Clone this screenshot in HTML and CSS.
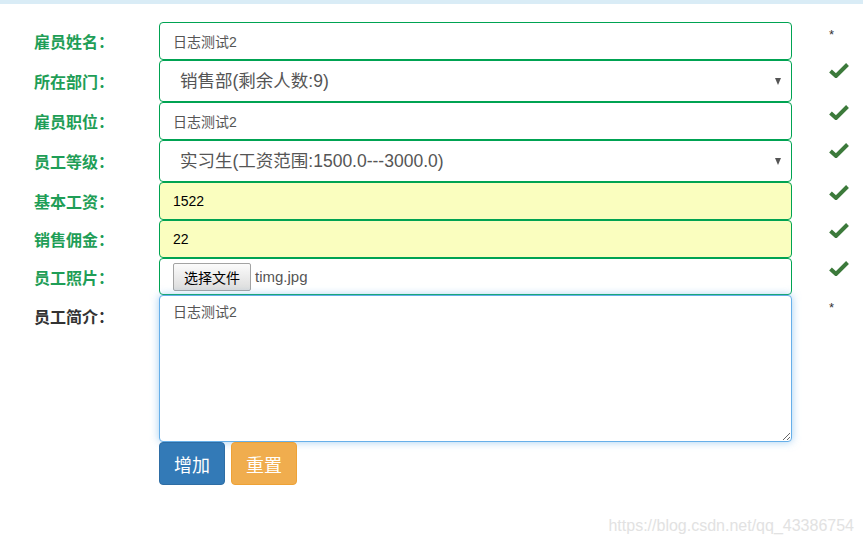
FILE: index.html
```html
<!DOCTYPE html>
<html lang="zh-CN">
<head>
    <meta charset="UTF-8">
    <title>添加雇员</title>
    <link rel="stylesheet" href="styles.css">
</head>
<body>
    <div class="top-bar"></div>

    <form class="emp-form">
        <!-- 雇员姓名 -->
        <label class="form-label">雇员姓名：</label>
        <input class="form-field" type="text" value="日志测试2">
        <div class="status"><span class="star">*</span></div>

        <!-- 所在部门 -->
        <label class="form-label">所在部门：</label>
        <div class="select-wrap">
            <select class="form-field form-select">
                <option>销售部(剩余人数:9)</option>
            </select>
        </div>
        <div class="status"><svg class="check" viewBox="0 0 20 16"><path d="M1.5 9 L7 14 L18.5 2.5"/></svg></div>

        <!-- 雇员职位 -->
        <label class="form-label">雇员职位：</label>
        <input class="form-field" type="text" value="日志测试2">
        <div class="status"><svg class="check" viewBox="0 0 20 16"><path d="M1.5 9 L7 14 L18.5 2.5"/></svg></div>

        <!-- 员工等级 -->
        <label class="form-label">员工等级：</label>
        <div class="select-wrap">
            <select class="form-field form-select">
                <option>实习生(工资范围:1500.0---3000.0)</option>
            </select>
        </div>
        <div class="status"><svg class="check" viewBox="0 0 20 16"><path d="M1.5 9 L7 14 L18.5 2.5"/></svg></div>

        <!-- 基本工资 -->
        <label class="form-label">基本工资：</label>
        <input class="form-field filled" type="text" value="1522">
        <div class="status"><svg class="check" viewBox="0 0 20 16"><path d="M1.5 9 L7 14 L18.5 2.5"/></svg></div>

        <!-- 销售佣金 -->
        <label class="form-label">销售佣金：</label>
        <input class="form-field filled" type="text" value="22">
        <div class="status"><svg class="check" viewBox="0 0 20 16"><path d="M1.5 9 L7 14 L18.5 2.5"/></svg></div>

        <!-- 员工照片 -->
        <label class="form-label">员工照片：</label>
        <div class="form-field file-field">
            <button type="button" class="file-btn">选择文件</button>
            <span class="file-name">timg.jpg</span>
        </div>
        <div class="status"><svg class="check" viewBox="0 0 20 16"><path d="M1.5 9 L7 14 L18.5 2.5"/></svg></div>

        <!-- 员工简介 -->
        <label class="form-label label-top label-dark">员工简介：</label>
        <textarea class="form-field note">日志测试2</textarea>
        <div class="status"><span class="star">*</span></div>

        <div></div>
        <div class="actions">
            <button type="button" class="btn btn-primary">增加</button>
            <button type="reset" class="btn btn-warning">重置</button>
        </div>
        <div></div>
    </form>

    <div class="watermark">https://blog.csdn.net/qq_43386754</div>
</body>
</html>
```

FILE: styles.css
```css
* {
    margin: 0;
    padding: 0;
    box-sizing: border-box;
}

body {
    background-color: #fff;
    font-family: "Liberation Sans", "Noto Sans CJK SC", sans-serif;
    color: #333;
    height: 544px;
    overflow: hidden;
    position: relative;
}

.top-bar {
    height: 4px;
    background-color: #d9ecf6;
}

/* Form Styles */
.emp-form {
    display: grid;
    grid-template-columns: 125px 633px 1fr;
    padding: 18px 0 0 34px;
}

.form-label {
    display: flex;
    align-items: center;
    font-size: 16px;
    font-weight: bold;
    color: #1f9e57;
}

.label-top {
    align-items: flex-start;
    padding-top: 9px;
}

.label-dark {
    color: #333;
}

.form-field {
    display: block;
    width: 100%;
    height: 38px;
    padding: 0 13px;
    border: 1px solid #00a352;
    border-radius: 4px;
    background-color: #fff;
    font-family: "Liberation Sans", "Noto Sans CJK SC", sans-serif;
    font-size: 14px;
    color: #555;
    outline: none;
}

.filled {
    background-color: #fafebf;
    color: #000;
}

.select-wrap {
    position: relative;
}

.select-wrap::after {
    content: "";
    position: absolute;
    right: 11px;
    top: 18px;
    border-left: 3.5px solid transparent;
    border-right: 3.5px solid transparent;
    border-top: 7px solid #555;
}

.form-select {
    height: 42px;
    padding-left: 20px;
    font-size: 17.5px;
    appearance: none;
    -webkit-appearance: none;
}

.file-field {
    display: flex;
    align-items: center;
    height: 37px;
    gap: 4px;
}

.file-btn {
    height: 28px;
    padding: 0 10px;
    border: 1px solid #a3a3a3;
    border-radius: 2px;
    background: linear-gradient(#fbfbfb, #dcdcdc);
    font-family: "Liberation Sans", "Noto Sans CJK SC", sans-serif;
    font-size: 14px;
    color: #000;
}

.file-name {
    font-size: 15px;
    color: #555;
}

.note {
    height: 147px;
    padding: 6px 13px;
    border-color: #66afe9;
    box-shadow: 0 0 8px rgba(102, 175, 233, 0.6);
    line-height: 20px;
    resize: both;
}

.status {
    padding: 3px 0 0 37px;
}

.star {
    font-size: 13px;
    color: #333;
}

.check {
    display: block;
    width: 20px;
    height: 16px;
    margin-top: -1px;
}

.check path {
    fill: none;
    stroke: #3c7a3b;
    stroke-width: 4;
}

/* Buttons */
.actions {
    display: flex;
    gap: 6px;
}

.btn {
    height: 43px;
    padding: 0 14px;
    border: 1px solid transparent;
    border-radius: 4px;
    font-family: "Liberation Sans", "Noto Sans CJK SC", sans-serif;
    font-size: 18px;
    color: #fff;
}

.btn-primary {
    background-color: #337ab7;
    border-color: #2e6da4;
}

.btn-warning {
    background-color: #f0ad4e;
    border-color: #eea236;
}

.watermark {
    position: absolute;
    right: 9px;
    bottom: 9px;
    font-size: 16px;
    color: #e2e2e2;
}
```
